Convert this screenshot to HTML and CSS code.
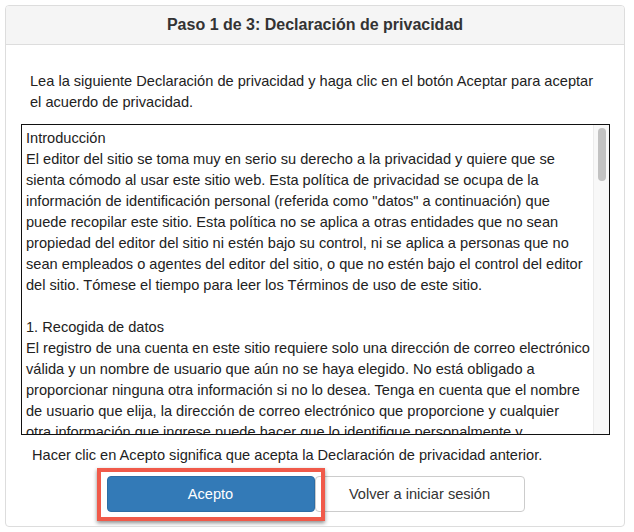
FILE: index.html
```html
<!DOCTYPE html>
<html lang="es">
<head>
    <meta charset="UTF-8">
    <title>Declaración de privacidad</title>
    <link rel="stylesheet" href="styles.css">
</head>
<body>
    <div class="panel">
        <div class="panel-heading">Paso 1 de 3: Declaración de privacidad</div>
        <div class="panel-body">
            <p class="intro">Lea la siguiente Declaración de privacidad y haga clic en el botón Aceptar para aceptar el acuerdo de privacidad.</p>

            <div class="policy">
                <div class="policy-text">
                    <p>Introducción<br>
                    El editor del sitio se toma muy en serio su derecho a la privacidad y quiere que se sienta cómodo al usar este sitio web. Esta política de privacidad se ocupa de la información de identificación personal (referida como "datos" a continuación) que puede recopilar este sitio. Esta política no se aplica a otras entidades que no sean propiedad del editor del sitio ni estén bajo su control, ni se aplica a personas que no sean empleados o agentes del editor del sitio, o que no estén bajo el control del editor del sitio. Tómese el tiempo para leer los Términos de uso de este sitio.</p>
                    <p>1. Recogida de datos<br>
                    El registro de una cuenta en este sitio requiere solo una dirección de correo electrónico válida y un nombre de usuario que aún no se haya elegido. No está obligado a proporcionar ninguna otra información si no lo desea. Tenga en cuenta que el nombre de usuario que elija, la dirección de correo electrónico que proporcione y cualquier otra&nbsp;información que ingrese puede hacer que lo identifique personalmente y potencialmente sea visible para otros usuarios del sitio.</p>
                </div>
                <div class="scroll-track"><div class="scroll-thumb"></div></div>
            </div>

            <p class="notice">Hacer clic en Acepto significa que acepta la Declaración de privacidad anterior.</p>

            <div class="actions">
                <div class="highlight">
                    <a href="#" class="btn btn-primary">Acepto</a>
                </div>
                <a href="#" class="btn btn-default">Volver a iniciar sesión</a>
            </div>
        </div>
    </div>
</body>
</html>
```

FILE: styles.css
```css
*{
    margin: 0;
    padding: 0;
    box-sizing: border-box;
}
body{
    background: #fff;
    font-family: "Liberation Sans", Arial, Helvetica, sans-serif;
    font-size: 14.6px;
    line-height: 21px;
    color: #222;
}
.panel{
    width: 620px;
    height: 522px;
    margin: 5px 0 0 5px;
    border: 1px solid #ddd;
    border-radius: 4px;
    overflow: hidden;
}
.panel-heading{
    height: 39px;
    line-height: 38px;
    background: #f5f5f5;
    border-bottom: 1px solid #ddd;
    text-align: center;
    font-size: 16px;
    font-weight: bold;
    color: #333;
}
.panel-body{
    padding: 26px 14px 0 15px;
}
.intro{
    padding: 0 9px;
    margin-bottom: 11px;
}
.policy{
    display: flex;
    height: 311px;
    border: 1px solid #111;
}
.policy-text{
    flex: 1;
    overflow: hidden;
    padding: 3px 0 3px 4px;
}
.policy-text p{
    margin-bottom: 21px;
}
.scroll-track{
    width: 16px;
    background: #f8f8f8;
    border-left: 1px solid #ececec;
    padding: 3px 3px 0 4px;
}
.scroll-thumb{
    height: 53px;
    border-radius: 4px;
    background: #c2c2c2;
}
.notice{
    padding: 0 11px;
    margin-top: 10px;
}
.actions{
    display: flex;
    justify-content: center;
    margin-top: 10px;
}
.highlight{
    position: relative;
}
.highlight::after{
    content: "";
    position: absolute;
    top: -8px;
    left: -10px;
    right: -10px;
    bottom: -9px;
    border: 4px solid #f05a4a;
    box-shadow: 0 2px 4px rgba(0, 0, 0, 0.45);
}
.btn{
    display: block;
    width: 208px;
    height: 36px;
    line-height: 34px;
    text-align: center;
    text-decoration: none;
    font-size: 14.6px;
    border: 1px solid #ccc;
    border-radius: 4px;
}
.btn-primary{
    background: #337ab7;
    border-color: #2e6da4;
    color: #fff;
}
.btn-default{
    width: 210px;
    background: #fff;
    color: #333;
}
```
